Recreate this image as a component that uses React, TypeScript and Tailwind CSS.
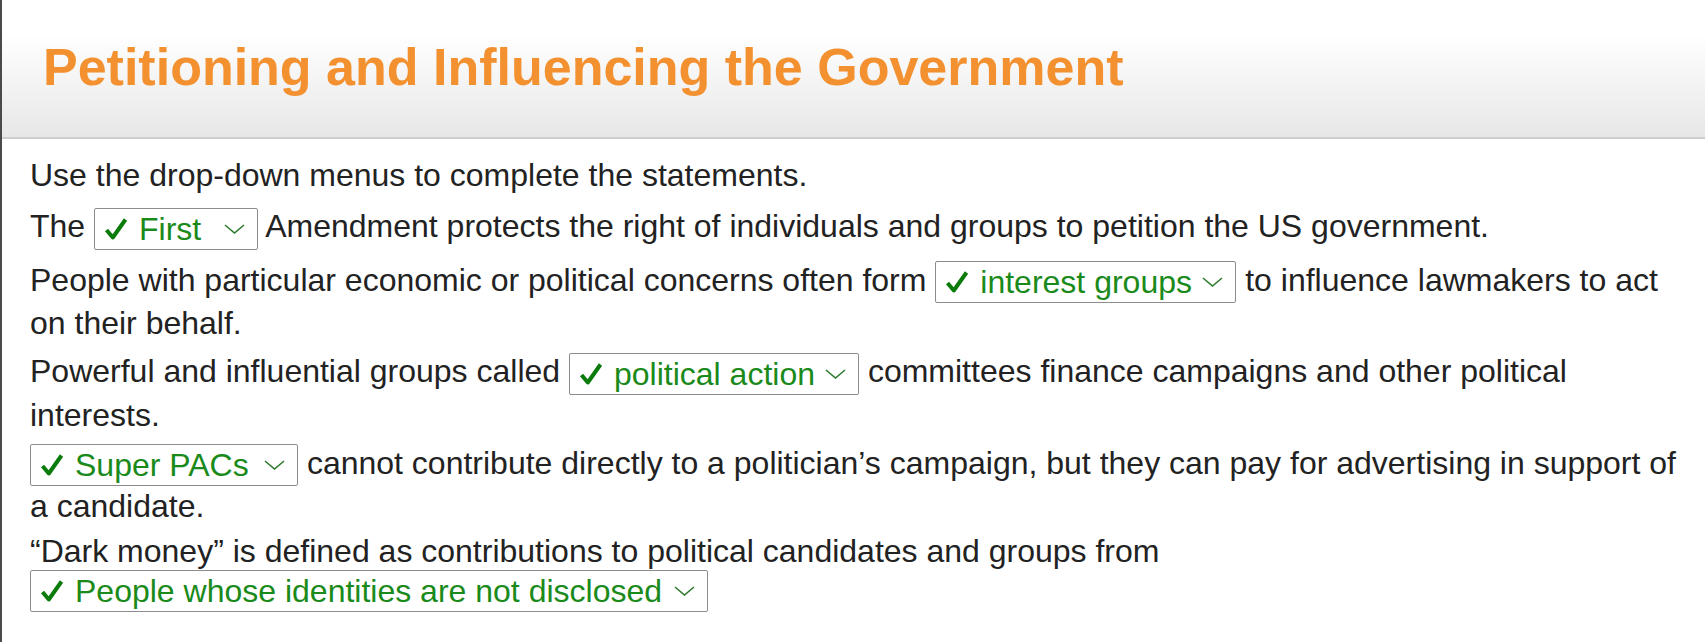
import type { ReactNode } from 'react'

function Check() {
  return (
    <svg width="24" height="24" viewBox="0 0 24 24" className="shrink-0">
      <path d="M2.5 13 L8.8 20.5 L21.5 2.5" fill="none" stroke="#0b7b0b" strokeWidth="4" strokeLinejoin="round" />
    </svg>
  )
}

function Chevron() {
  return (
    <svg width="21" height="10" viewBox="0 0 21 10" className="shrink-0">
      <polyline points="1,1 10.5,9 20,1" fill="none" stroke="#2e7a2e" strokeWidth="1.6" />
    </svg>
  )
}

function Answer({ width, children }: { width: string; children: ReactNode }) {
  return (
    <span className={`inline-flex h-[42px] items-center justify-between rounded-[2px] border border-[#8c8c8c] pl-[9px] pr-[12px] align-middle text-[#1a8a1a] ${width}`}>
      <span className="flex items-center gap-[11px]">
        <Check />
        <span>{children}</span>
      </span>
      <Chevron />
    </span>
  )
}

export default function App() {
  return (
    <div className="min-h-screen border-l-2 border-[#4a4a4a] bg-white font-['Liberation_Sans',Arial,sans-serif]">
      <header className="flex h-[139px] items-center border-b-2 border-[#cdcdcd] bg-linear-to-b from-white from-25% to-[#e7e7e7] pb-[4px] pl-[41px]">
        <h1 className="text-[52px] font-bold leading-none text-[#f3902f]">Petitioning and Influencing the Government</h1>
      </header>

      <div className="pl-[28px] pr-[14px] pt-[16px] text-[32px] leading-[40px] text-[#222]">
        <p className="mb-[11px]">Use the drop-down menus to complete the statements.</p>
        <p className="mb-[10px]">
          The <Answer width="w-[164px]">First</Answer> Amendment protects the right of individuals and groups to petition the US government.
        </p>
        <p className="mb-[8px]">
          People with particular economic or political concerns often form <Answer width="w-[301px]">interest groups</Answer> to influence lawmakers to act on their behalf.
        </p>
        <p className="mb-[8px]">
          Powerful and influential groups called <Answer width="w-[290px]">political action</Answer> committees finance campaigns and other political interests.
        </p>
        <p className="mb-[7px]">
          <Answer width="w-[268px]">Super PACs</Answer> cannot contribute directly to a politician’s campaign, but they can pay for advertising in support of a candidate.
        </p>
        <p className="leading-[37px]">
          “Dark money” is defined as contributions to political candidates and groups from <Answer width="w-[678px]">People whose identities are not disclosed</Answer>
        </p>
      </div>
    </div>
  )
}
